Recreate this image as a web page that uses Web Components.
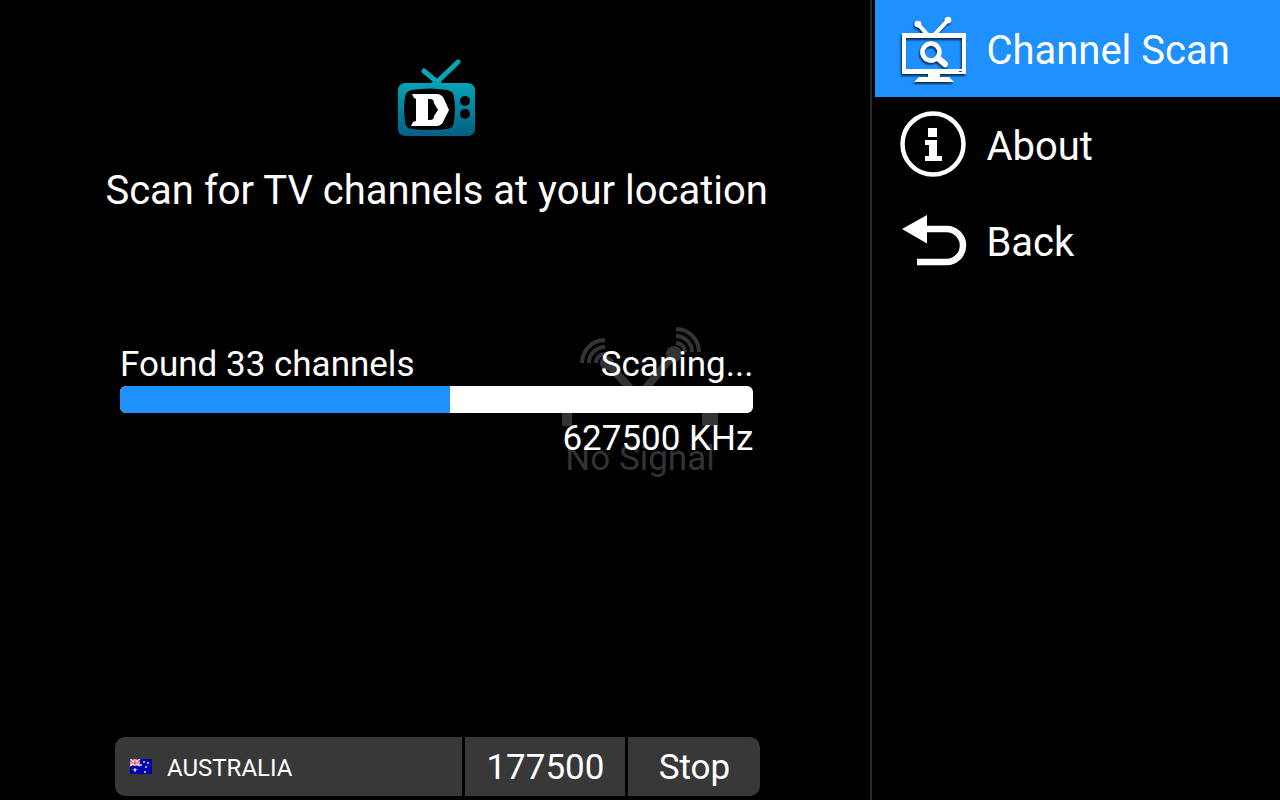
<!DOCTYPE html>
<html lang="en">
<head>
<meta charset="utf-8">
<meta name="viewport" content="width=device-width, initial-scale=1">
<title>Channel Scan</title>
<style>
  body {
    margin: 0;
    background: #000;
    color: #fff;
    font-family: Roboto, "Liberation Sans", sans-serif;
  }
</style>
</head>
<body>
<tv-screen>
  <no-signal slot="backdrop">No Signal</no-signal>
  <tv-logo></tv-logo>
  <scan-title>Scan for TV channels at your location</scan-title>
  <scan-progress value="330" max="633">
    <span slot="found">Found 33 channels</span>
    <span slot="state">Scaning...</span>
    <span slot="frequency">627500 KHz</span>
  </scan-progress>
  <scan-controls slot="controls" country="AUSTRALIA" frequency="177500">Stop</scan-controls>
  <menu-item slot="menu" href="#scan" icon="scan" selected>Channel Scan</menu-item>
  <menu-item slot="menu" href="#about" icon="about">About</menu-item>
  <menu-item slot="menu" href="#back" icon="back">Back</menu-item>
</tv-screen>

<script>
class TvScreen extends HTMLElement {
  constructor() {
    super();
    this.attachShadow({ mode: "open" });
    this.shadowRoot.innerHTML = `
    <style>
      :host {
        display: flex;
        min-height: 100vh;
      }
      .backdrop {
        position: absolute;
        inset: 0;
        z-index: -1;
        display: grid;
        place-items: center;
      }
      main {
        flex: 1;
        min-width: 0;
        display: flex;
        flex-direction: column;
        box-sizing: border-box;
        padding: 57px 0 4px 3px;
      }
      .controls {
        margin-top: auto;
      }
      nav {
        flex: 0 0 32%;
        box-sizing: border-box;
        border-left: 2px solid #2b2b2b;
        padding-left: 3px;
      }
    </style>
    <div class="backdrop"><slot name="backdrop"></slot></div>
    <main>
      <slot></slot>
      <div class="controls"><slot name="controls"></slot></div>
    </main>
    <nav aria-label="Menu"><slot name="menu"></slot></nav>`;
  }
}

class NoSignal extends HTMLElement {
  constructor() {
    super();
    this.attachShadow({ mode: "open" });
    this.shadowRoot.innerHTML = `
    <style>
      :host {
        display: flex;
        flex-direction: column;
        align-items: center;
        gap: 12px;
        color: #333;
        font-size: 35px;
        line-height: 42px;
      }
      svg {
        display: block;
      }
    </style>
    <svg width="160" height="106" viewBox="0 0 160 106" fill="none" stroke="#333" aria-hidden="true">
      <g stroke-width="4">
        <path d="M22 43A23 23 0 0 1 45 20M29 43A16 16 0 0 1 45 27M36 43A9 9 0 0 1 45 34"/>
        <path d="M116 9A23 23 0 0 1 139 32M116 16A16 16 0 0 1 132 32M116 23A9 9 0 0 1 125 32"/>
      </g>
      <path d="M47 43l31 34M114 34L81 74" stroke-width="8"/>
      <circle cx="47" cy="43" r="7" fill="#333" stroke="none"/>
      <circle cx="114" cy="34" r="8" fill="#333" stroke="none"/>
      <path d="M2 106V74h156v32h-16V84H12v22z" fill="#333" stroke="none"/>
    </svg>
    <slot></slot>`;
  }
}

class TvLogo extends HTMLElement {
  constructor() {
    super();
    this.attachShadow({ mode: "open" });
    this.shadowRoot.innerHTML = `
    <style>
      :host {
        display: flex;
        justify-content: center;
      }
      svg {
        display: block;
      }
    </style>
    <svg width="80" height="80" viewBox="0 0 80 80" role="img" aria-label="TV">
      <defs>
        <linearGradient id="body" x1="0" y1="0" x2="0" y2="1">
          <stop offset="0" stop-color="#06a3b4"/>
          <stop offset="1" stop-color="#045f83"/>
        </linearGradient>
      </defs>
      <path d="M27 14l12 10M61 5L40 25" fill="none" stroke="#08a5b5" stroke-width="5" stroke-linecap="round" stroke-linejoin="round"/>
      <path d="M33 27l5-4h4l4 4z" fill="#08a5b5"/>
      <rect x="1" y="26" width="77" height="53" rx="7" fill="url(#body)"/>
      <path d="M15 33Q33 30 50 33Q57 34 57 41Q59 52 57 64Q57 71 50 72Q33 74 15 72Q8 71 8 64Q6 52 8 41Q8 34 15 33z" fill="#000"/>
      <path d="M15 37H39Q45 37 47 42L52 53L47 63Q45 69 39 69H14L16 65L19 64V42L17 41zM31 42V63H33Q37 63 37 59L41 53L37 46Q37 42 33 42z" fill="#fff" fill-rule="evenodd"/>
      <circle cx="68" cy="44" r="5" fill="#000"/>
      <circle cx="68" cy="57" r="5" fill="#000"/>
    </svg>`;
  }
}

class ScanTitle extends HTMLElement {
  constructor() {
    super();
    this.attachShadow({ mode: "open" });
    this.shadowRoot.innerHTML = `
    <style>
      :host {
        display: block;
        margin-top: 30px;
      }
      h1 {
        margin: 0;
        font-size: 40px;
        font-weight: 400;
        line-height: 48px;
        text-align: center;
      }
    </style>
    <h1><slot></slot></h1>`;
  }
}

class ScanProgress extends HTMLElement {
  constructor() {
    super();
    this.attachShadow({ mode: "open" });
    this.shadowRoot.innerHTML = `
    <style>
      :host {
        display: block;
        margin-top: 129px;
        padding: 0 117px;
        font-size: 35px;
        line-height: 42px;
      }
      label {
        display: flex;
        justify-content: space-between;
      }
      progress {
        display: block;
        width: 100%;
        height: 27px;
        margin: 0 0 5px;
        border: 0;
        border-radius: 6px;
        overflow: hidden;
        appearance: none;
        background: #fff;
      }
      progress::-webkit-progress-bar {
        background: #fff;
      }
      progress::-webkit-progress-value {
        background: #1e90ff;
      }
      .frequency {
        text-align: right;
      }
    </style>
    <label for="bar"><slot name="found"></slot><slot name="state"></slot></label>
    <progress id="bar"></progress>
    <div class="frequency"><slot name="frequency"></slot></div>`;
  }

  connectedCallback() {
    const bar = this.shadowRoot.querySelector("progress");
    bar.max = Number(this.getAttribute("max"));
    bar.value = Number(this.getAttribute("value"));
  }
}

class ScanControls extends HTMLElement {
  constructor() {
    super();
    this.attachShadow({ mode: "open" });
    this.shadowRoot.innerHTML = `
    <style>
      :host {
        display: grid;
        grid-template-columns: 1fr 160px 132px;
        gap: 3px;
        height: 59px;
        padding: 0 110px 0 112px;
      }
      .country, input, button {
        box-sizing: border-box;
        width: 100%;
        height: 100%;
        border: 0;
        background: #383838;
        color: #fff;
        font: 35px Roboto, "Liberation Sans", sans-serif;
        text-align: center;
      }
      .country {
        display: flex;
        align-items: center;
        gap: 15px;
        padding: 0 15px;
        border-radius: 10px 0 0 10px;
      }
      select {
        flex: 1;
        min-width: 0;
        height: 100%;
        padding: 2px 0 0;
        border: 0;
        appearance: none;
        background: transparent;
        color: inherit;
        font: 24px Roboto, "Liberation Sans", sans-serif;
      }
      input, button {
        padding: 2px 0 0;
      }
      button {
        border-radius: 0 10px 10px 0;
      }
    </style>
    <div class="country">
      <svg width="22" height="15" viewBox="0 0 22 15" aria-hidden="true">
        <rect width="22" height="15" fill="#0000a8"/>
        <path d="M0 0l10 7M10 0L0 7" stroke="#e8b8d8" stroke-width="2"/>
        <path d="M5 0v7M0 4h10" stroke="#fff" stroke-width="3"/>
        <path d="M5 0v7M0 4h10" stroke="#f02030" stroke-width="1"/>
        <g fill="#d0d8ff">
          <path d="M5 9l1 1h2l-2 1 0 2-1-1-1 1 0-2-2-1h2z"/>
          <circle cx="14" cy="3" r="1"/>
          <circle cx="18" cy="4" r="1"/>
          <circle cx="11" cy="6" r="1"/>
          <circle cx="16" cy="8" r="1"/>
          <circle cx="15" cy="13" r="1"/>
        </g>
      </svg>
      <select aria-label="Country"><option></option></select>
    </div>
    <input type="text" inputmode="numeric" aria-label="Frequency">
    <button type="button"><slot></slot></button>`;
  }

  connectedCallback() {
    this.shadowRoot.querySelector("option").textContent = this.getAttribute("country");
    this.shadowRoot.querySelector("input").value = this.getAttribute("frequency");
  }
}

const icons = {
  scan: `
    <g filter="url(#shade)">
      <path d="M19 11l10 11M49 7L35 22" stroke="#fff" stroke-width="4"/>
      <circle cx="19" cy="11" r="3.300" fill="#fff"/>
      <circle cx="49" cy="7" r="3.300" fill="#fff"/>
      <path d="M3 20h64v41H3zM7 25v31h56V25z" fill="#fff" fill-rule="evenodd"/>
      <path d="M29 60h12v4h9l5 5H15l5-5h9z" fill="#fff"/>
      <circle cx="32" cy="39" r="8.500" stroke="#fff" stroke-width="4.500"/>
      <path d="M39 45l7 6" stroke="#fff" stroke-width="6" stroke-linecap="round"/>
    </g>
    <path d="M60 58.500h3" stroke="#1e5fa8" stroke-width="1"/>`,
  about: `
    <circle cx="34" cy="35" r="30.500" stroke="#fff" stroke-width="4.500"/>
    <path d="M29 19h9v9h-9zM26 31h12v16h5v5H26v-5h4V36h-4z" fill="#fff"/>`,
  back: `
    <path d="M26 24h21.500a16.500 16.500 0 0 1 0 33H18" stroke="#fff" stroke-width="6.500"/>
    <path d="M3 24L28 10v28.500z" fill="#fff"/>`
};

class MenuItem extends HTMLElement {
  constructor() {
    super();
    this.attachShadow({ mode: "open" });
    this.shadowRoot.innerHTML = `
    <style>
      :host {
        display: block;
      }
      a {
        display: flex;
        align-items: center;
        gap: 17px;
        height: 96px;
        padding-left: 24px;
        color: inherit;
        font-size: 40px;
        line-height: 48px;
        text-decoration: none;
      }
      :host([selected]) a {
        height: 97px;
        background: #1e90ff;
      }
      svg {
        display: block;
        flex: none;
      }
      span {
        padding-top: 4px;
      }
    </style>
    <a>
      <svg width="70" height="72" viewBox="0 0 70 72" fill="none" aria-hidden="true"></svg>
      <span><slot></slot></span>
    </a>`;
  }

  connectedCallback() {
    this.shadowRoot.querySelector("a").href = this.getAttribute("href");
    this.shadowRoot.querySelector("svg").innerHTML = `
      <defs>
        <filter id="shade" x="-10%" y="-10%" width="120%" height="130%">
          <feDropShadow dx="-1" dy="2" stdDeviation="1" flood-color="#000" flood-opacity="0.7"/>
        </filter>
      </defs>
      ${icons[this.getAttribute("icon")]}`;
  }
}

customElements.define("tv-screen", TvScreen);
customElements.define("no-signal", NoSignal);
customElements.define("tv-logo", TvLogo);
customElements.define("scan-title", ScanTitle);
customElements.define("scan-progress", ScanProgress);
customElements.define("scan-controls", ScanControls);
customElements.define("menu-item", MenuItem);
</script>
</body>
</html>
